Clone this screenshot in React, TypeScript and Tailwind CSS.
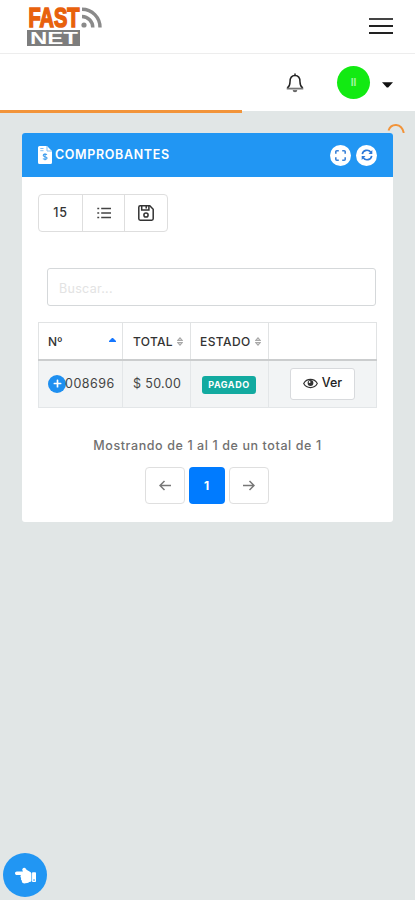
import { FaHandPointLeft, FaPlus } from "react-icons/fa";

function Logo() {
  return (
    <svg width="78" height="42" viewBox="0 0 78 42" className="block overflow-visible">
      <text x="1.5" y="21" textLength="51" lengthAdjust="spacingAndGlyphs" fontFamily="'Liberation Sans', sans-serif" fontWeight="700" fontSize="27" fill="#e8610c" stroke="#e8610c" strokeWidth="1.6">FAST</text>
      <rect x="0" y="24" width="53" height="16" fill="#7d7d7d" />
      <text x="3" y="37.5" textLength="48" lengthAdjust="spacingAndGlyphs" fontFamily="'Liberation Sans', sans-serif" fontWeight="700" fontSize="16.5" fill="#fff">NET</text>
      <circle cx="57" cy="19" r="2.6" fill="#8a8a8a" />
      <path d="M55 10.5a11 11 0 0 1 10.8 11M55 3.2A18 18 0 0 1 73 21.5" fill="none" stroke="#8a8a8a" strokeWidth="3.4" />
    </svg>
  );
}

function SortIcon() {
  return (
    <svg width="6" height="9" viewBox="0 0 6 9" fill="none" stroke="#a9a9a9" strokeWidth="1.1">
      <path d="M.8 3.4 3 .8l2.200 2.600zM.8 5.600 3 8.200l2.200-2.600z" />
    </svg>
  );
}

function TopBar() {
  return (
    <header className="bg-white">
      <div className="flex h-[54px] items-start justify-between border-b border-[#ededed] pl-[27px] pr-[22px]">
        <div className="pt-[6px]"><Logo /></div>
        <button className="flex w-6 flex-col gap-[5px] pt-[18px]">
          <span className="h-[2px] w-full bg-[#444]" />
          <span className="h-[2px] w-full bg-[#222]" />
          <span className="h-[2px] w-full bg-[#222]" />
        </button>
      </div>
      <div className="flex h-[57px] items-center justify-end pr-[22px]">
        <svg width="18" height="20" viewBox="0 0 18 20" className="mr-[33px]" fill="none" stroke="#222" strokeWidth="1.500">
          <path d="M9 .5v2M1.200 15.200c2.300-1.700 2.800-3.400 2.800-6.300C4 5.200 5.800 2.600 9 2.600s5 2.600 5 6.300c0 2.900.5 4.600 2.800 6.300" />
          <path d="M.7 15.600h16.600" stroke="#777" strokeWidth="1.800" />
          <path d="M7.400 17.200c.2 1.800 3 1.800 3.200 0" fill="#666" stroke="#666" />
        </svg>
        <div className="flex h-[33px] w-[33px] items-center justify-center rounded-full bg-[#12ea12] text-[10px] font-bold text-[#a0f5a0]">II</div>
        <svg width="11" height="6" viewBox="0 0 11 6" className="ml-3 mt-[5px]"><path d="M0 .3h11L6.200 5.500H4.800z" fill="#111" /></svg>
      </div>
    </header>
  );
}

function CardHeader() {
  return (
    <div className="flex h-11 items-center rounded-t-[3px] bg-[#2196f3] px-4 text-white">
      <svg width="14" height="18" viewBox="0 0 14 18">
        <path d="M1.500 0H9l5 5v11.500a1.500 1.500 0 0 1-1.500 1.500h-11A1.500 1.500 0 0 1 0 16.500V1.500A1.500 1.500 0 0 1 1.500 0z" fill="#fff" />
        <path d="M9 0v5h5M2.300 2.500h3.200M2.300 4.700h3.200" fill="none" stroke="#7fbef5" strokeWidth="1" />
        <path d="M9 8.700c-1-.9-3.800-.9-3.800.7 0 1.700 3.900.9 3.900 2.700 0 1.600-3 1.600-4.200.6M7 7.300v7" fill="none" stroke="#429fed" strokeWidth="1.100" />
      </svg>
      <h1 className="ml-[3px] text-[12.500px] font-semibold tracking-[0.650px]">COMPROBANTES</h1>
      <div className="ml-auto flex gap-[5px]">
        <button className="flex h-[21px] w-[21px] items-center justify-center rounded-full bg-white">
          <svg width="11" height="11" viewBox="0 0 11 11" fill="none" stroke="#3b82d8" strokeWidth="1.600">
            <path d="M.8 3.800v-2a1 1 0 0 1 1-1h2M7.200.8h2a1 1 0 0 1 1 1v2M10.200 7.200v2a1 1 0 0 1-1 1h-2M3.800 10.200h-2a1 1 0 0 1-1-1v-2" />
          </svg>
        </button>
        <button className="flex h-[21px] w-[21px] items-center justify-center rounded-full bg-white">
          <svg width="12" height="12" viewBox="0 0 12 12" fill="none" stroke="#2d78d8" strokeWidth="1.600">
            <path d="M1.300 5.200a4.700 4.700 0 0 1 8.500-1.900M10.700 6.800a4.700 4.700 0 0 1-8.500 1.900" />
            <path d="M11.300 1v4H7.500zM.7 11V7h3.800z" fill="#2d78d8" stroke="none" />
          </svg>
        </button>
      </div>
    </div>
  );
}

function Toolbar() {
  return (
    <div className="flex h-[38px] w-[130px] rounded-[4px] border border-[#dedede] text-[#333]">
      <button className="w-[44px] border-r border-[#dedede] text-[12.500px] font-medium tracking-[0.800px]">15</button>
      <button className="flex w-[42px] items-center justify-center border-r border-[#dedede]">
        <svg width="14" height="12" viewBox="0 0 14 12" stroke="#444" strokeWidth="1.300">
          <path d="M4.200 1.500H14M4.200 6H14M4.200 10.500H14M.3 1.500h1.900M.3 6h1.900M.3 10.500h1.900" />
        </svg>
      </button>
      <button className="flex flex-1 items-center justify-center pb-px">
        <svg width="16" height="16" viewBox="0 0 16 16" fill="none" stroke="#333" strokeWidth="1.500">
          <path d="M2.200.8h9.600l3.400 3.400v9.600a1.400 1.400 0 0 1-1.400 1.400H2.200a1.400 1.400 0 0 1-1.400-1.400V2.200A1.400 1.400 0 0 1 2.200.8z" />
          <path d="M3.700 1v4h7.200V1M8.200 1v2.600" />
          <circle cx="8" cy="10" r="2.100" />
        </svg>
      </button>
    </div>
  );
}

function InvoiceTable() {
  return (
    <table className="mt-4 w-[338px] table-fixed border-collapse text-left text-[#333]">
      <colgroup>
        <col className="w-[84px]" />
        <col className="w-[68px]" />
        <col className="w-[78px]" />
        <col className="w-[108px]" />
      </colgroup>
      <thead>
        <tr className="h-[37px] text-[12px]">
          <th className="border border-b-2 border-[#e1e3e4] border-b-[#cbcdce] px-[9px] pb-0 pt-[2px] font-medium">
            <div className="flex items-center justify-between">
              Nº
              <svg width="7" height="4" viewBox="0 0 7 4" className="-mr-[3px] mb-1"><path d="M0 4V3L3 0h1l3 3v1z" fill="#1677ff" /></svg>
            </div>
          </th>
          <th className="border border-b-2 border-[#e1e3e4] border-b-[#cbcdce] pb-0 pl-[10px] pr-0 pt-[2px] font-medium">
            <div className="flex items-center gap-1 tracking-[0.300px]">TOTAL <SortIcon /></div>
          </th>
          <th className="border border-b-2 border-[#e1e3e4] border-b-[#cbcdce] pb-0 pl-[9px] pr-0 pt-[2px] font-medium">
            <div className="flex items-center gap-1 tracking-[0.400px]">ESTADO <SortIcon /></div>
          </th>
          <th className="border border-b-2 border-[#e1e3e4] border-b-[#cbcdce]" />
        </tr>
      </thead>
      <tbody>
        <tr className="h-12 bg-[#f2f4f5] text-[12.500px] text-[#444]">
          <td className="border border-[#e3e6e8] py-0 pl-[9px] pr-0">
            <div className="flex items-center">
              <span className="flex h-[18px] w-[18px] shrink-0 items-center justify-center rounded-full bg-[#1e8ff0] text-white"><FaPlus size={9} /></span>
              <span className="-ml-px mt-px tracking-[0.500px]">008696</span>
            </div>
          </td>
          <td className="border border-[#e3e6e8] pb-0 pl-[10px] pr-0 pt-px tracking-[0.350px]">$ 50.00</td>
          <td className="border border-[#e3e6e8] py-0 pl-[11px] pr-0">
            <span className="mt-[2px] flex h-[18px] w-[54px] items-center justify-center rounded-[3px] bg-[#12aaa0] text-[9px] font-bold tracking-[0.550px] text-white">PAGADO</span>
          </td>
          <td className="border border-[#e3e6e8] p-0">
            <button className="mx-auto flex h-8 w-[65px] items-center justify-center gap-1 rounded-[3px] border border-[#d8dadd] bg-white text-[12.500px] font-medium text-[#222]">
              <svg width="15" height="11" viewBox="0 0 15 11" fill="none" stroke="#333" strokeWidth="1.200">
                <path d="M.7 5.500C3.700.1 11.300.1 14.300 5.500 11.300 10.900 3.700 10.900.7 5.500z" />
                <circle cx="7.500" cy="5" r="2.900" fill="#333" stroke="none" />
                <circle cx="6.600" cy="4" r=".9" fill="#fff" stroke="none" />
              </svg>
              Ver
            </button>
          </td>
        </tr>
      </tbody>
    </table>
  );
}

function Pagination() {
  return (
    <div className="flex justify-center gap-1 pr-[2px] text-[#777]">
      <button className="flex h-[37px] w-10 items-center justify-center rounded-[4px] border border-[#dfdfdf]">
        <svg width="12" height="11" viewBox="0 0 12 11" fill="none" stroke="currentColor" strokeWidth="1.500"><path d="M12 5.500H1M5.500 1 1 5.500 5.500 10" /></svg>
      </button>
      <button className="h-[37px] w-9 rounded-[4px] bg-[#007bff] text-[12px] font-bold text-white">1</button>
      <button className="flex h-[37px] w-10 items-center justify-center rounded-[4px] border border-[#dfdfdf]">
        <svg width="12" height="11" viewBox="0 0 12 11" fill="none" stroke="currentColor" strokeWidth="1.500"><path d="M0 5.500h11M6.500 1 11 5.500 6.500 10" /></svg>
      </button>
    </div>
  );
}

export default function App() {
  return (
    <div className="relative h-[900px] w-full overflow-hidden bg-[#e1e6e6] font-['Inter','Liberation_Sans',sans-serif]">
      <TopBar />
      {/* page loading bar and spinner */}
      <div className="absolute left-0 top-[110px] h-[3px] w-[242px] bg-[#f2943a]" />
      <svg width="18" height="10" viewBox="0 0 18 10" className="absolute left-[387px] top-[123px] z-10" fill="none" stroke="#f2943a" strokeWidth="2">
        <path d="M1.500 7.500C4 .2 14.500-.8 16.800 10" />
      </svg>

      <main className="ml-[22px] mt-[22px] h-[389px] w-[371px] rounded-[3px] bg-white">
        <CardHeader />
        <div className="pl-4 pt-[17px]">
          <Toolbar />
          <input placeholder="Buscar..." className="ml-[9px] mt-[36px] block h-[38px] w-[329px] rounded-[3px] border border-[#d5d8da] px-[11px] pt-[2px] text-[12.500px] tracking-[0.300px] outline-none placeholder:text-[#e3e3e3]" />
          <InvoiceTable />
        </div>
        <p className="mb-[12px] mt-[29px] text-center text-[12.500px] font-medium leading-[18px] tracking-[0.600px] text-[#707070]">Mostrando de 1 al 1 de un total de 1</p>
        <Pagination />
      </main>

      <button className="absolute left-[3px] top-[853px] flex h-11 w-11 items-center justify-center rounded-full bg-[#2196f3] text-white">
        <FaHandPointLeft size={21} />
      </button>
    </div>
  );
}
